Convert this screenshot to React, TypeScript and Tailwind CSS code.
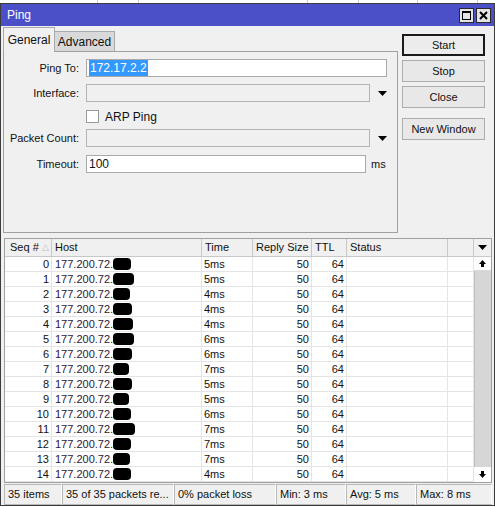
const rows = [
  { seq: 0, time: "5ms", blob: 18 },
  { seq: 1, time: "5ms", blob: 21 },
  { seq: 2, time: "4ms", blob: 17 },
  { seq: 3, time: "4ms", blob: 19 },
  { seq: 4, time: "4ms", blob: 20 },
  { seq: 5, time: "6ms", blob: 21 },
  { seq: 6, time: "6ms", blob: 19 },
  { seq: 7, time: "7ms", blob: 16 },
  { seq: 8, time: "5ms", blob: 19 },
  { seq: 9, time: "5ms", blob: 16 },
  { seq: 10, time: "6ms", blob: 18 },
  { seq: 11, time: "7ms", blob: 22 },
  { seq: 12, time: "7ms", blob: 18 },
  { seq: 13, time: "7ms", blob: 17 },
  { seq: 14, time: "4ms", blob: 18 },
];

const DownTri = () => (
  <svg width="9" height="5" viewBox="0 0 9 5">
    <path d="M0 0h9L4.5 5z" fill="#000" />
  </svg>
);

const ArrowUp = () => (
  <svg width="7" height="7" viewBox="0 0 7 7">
    <path d="M3.5 0L7 4H0z M2 4h3v3H2z" fill="#000" />
  </svg>
);

const ArrowDown = () => (
  <svg width="7" height="7" viewBox="0 0 7 7">
    <path d="M2 0h3v3H2z M0 3h7L3.5 7z" fill="#000" />
  </svg>
);

const Label = ({ text }: { text: string }) => (
  <div className="w-[76px] shrink-0 text-right pr-px">{text}</div>
);

const App = () => {
  return (
    <div className="w-[495px] h-[507px] bg-white font-['Liberation_Sans',Arial,sans-serif] text-[11px] text-[#111] leading-none overflow-hidden">
      {/* window behind */}
      <div className="flex h-[3px] bg-white">
        <div className="w-[98px] border-r border-[#cfcfcf]" />
        <div className="w-[41px] border-r border-[#cfcfcf]" />
        <div className="w-[169px] border-r border-[#cfcfcf]" />
        <div className="w-[51px] border-r border-[#cfcfcf]" />
        <div className="w-[59px] border-r border-[#cfcfcf]" />
        <div className="w-[60px] border-r border-[#cfcfcf]" />
      </div>

      <div className="w-[495px] h-[503px] border border-[#3c3c3c] bg-[#f0f0f0] flex flex-col">
        {/* title bar */}
        <div className="h-[22px] bg-[#4b50c8] flex items-center justify-between pl-[6px] pr-[3px]">
          <span className="text-white text-[12px]">Ping</span>
          <div className="flex gap-[2px]">
            <div className="w-[15px] h-[15px] bg-[#e4e4e4] border border-[#2a2a2a] flex items-center justify-center">
              <div className="w-[9px] h-[9px] border border-black border-t-2" />
            </div>
            <div className="w-[15px] h-[15px] bg-[#e4e4e4] border border-[#2a2a2a] flex items-center justify-center">
              <svg width="9" height="9" viewBox="0 0 9 9">
                <path d="M1 1L8 8M8 1L1 8" stroke="#000" strokeWidth="2" />
              </svg>
            </div>
          </div>
        </div>

        {/* top section */}
        <div className="flex pt-px pl-[2px] h-[207px]">
          <div className="w-[395px] flex flex-col">
            <div className="flex items-end h-[24px]">
              <div className="relative z-10 -mb-px h-[25px] w-[52px] bg-[#f0f0f0] border border-b-0 border-[#a9a9a9] flex items-center justify-center text-[12px]">
                General
              </div>
              <div className="h-[20px] w-[60px] bg-[#d9d9d9] border border-b-0 border-l-0 border-[#a9a9a9] flex items-center justify-center text-[12px]">
                Advanced
              </div>
            </div>
            <div className="h-[182px] border border-[#a0a0a0] pt-[7px] flex flex-col">
              <div className="flex items-center gap-[6px] h-[18px]">
                <Label text="Ping To:" />
                <div className="w-[301px] h-[18px] bg-white border border-[#a9a9a9] flex items-center pl-[2px]">
                  <span className="bg-[#3399ff] text-white text-[12px] px-px py-[2px]">172.17.2.2</span>
                </div>
              </div>
              <div className="flex items-center gap-[6px] h-[18px] mt-[7px]">
                <Label text="Interface:" />
                <div className="w-[284px] h-[18px] border border-[#b4b4b4]" />
                <div className="ml-[2px]"><DownTri /></div>
              </div>
              <div className="flex items-center h-[13px] mt-[8px] pl-[82px]">
                <div className="w-[13px] h-[13px] bg-white border border-[#9a9a9a]" />
                <span className="ml-[6px] text-[12px]">ARP Ping</span>
              </div>
              <div className="flex items-center gap-[6px] h-[18px] mt-[6px]">
                <Label text="Packet Count:" />
                <div className="w-[284px] h-[18px] border border-[#b4b4b4]" />
                <div className="ml-[2px]"><DownTri /></div>
              </div>
              <div className="flex items-center gap-[6px] h-[18px] mt-[8px]">
                <Label text="Timeout:" />
                <div className="w-[280px] h-[18px] bg-white border border-[#a9a9a9] flex items-center pl-[2px] text-[12px]">
                  100
                </div>
                <span className="-ml-[1px]">ms</span>
              </div>
            </div>
          </div>

          {/* buttons */}
          <div className="flex flex-col pt-[7px] pl-[4px]">
            <div className="w-[83px] h-[22px] border-2 border-[#1a1a1a] bg-[#ececec] flex items-center justify-center">Start</div>
            <div className="w-[83px] h-[22px] mt-[4px] border border-[#adadad] bg-[#e8e8e8] flex items-center justify-center">Stop</div>
            <div className="w-[83px] h-[22px] mt-[4px] border border-[#adadad] bg-[#e8e8e8] flex items-center justify-center">Close</div>
            <div className="w-[83px] h-[22px] mt-[10px] border border-[#adadad] bg-[#e8e8e8] flex items-center justify-center">New Window</div>
          </div>
        </div>

        {/* table */}
        <div className="ml-[3px] mt-[5px] w-[488px] border border-[#a0a0a0] flex bg-white">
          <div className="w-[469px]">
            <div className="grid grid-cols-[47px_150px_51px_59px_35px_101px_26px] h-[18px] bg-[#f0f0f0] border-b border-[#c8c8c8]">
              <div className="border-r border-[#c8c8c8] flex items-center pl-[5px] gap-[3px]">
                Seq #<span className="text-[#c0c0c0] text-[9px]">△</span>
              </div>
              <div className="border-r border-[#c8c8c8] flex items-center pl-[3px]">Host</div>
              <div className="border-r border-[#c8c8c8] flex items-center pl-[3px]">Time</div>
              <div className="border-r border-[#c8c8c8] flex items-center pl-[3px]">Reply Size</div>
              <div className="border-r border-[#c8c8c8] flex items-center pl-[3px]">TTL</div>
              <div className="border-r border-[#c8c8c8] flex items-center pl-[3px]">Status</div>
              <div className="border-r border-[#c8c8c8]" />
            </div>
            {rows.map((r) => (
              <div
                key={r.seq}
                className="grid grid-cols-[47px_150px_51px_59px_35px_101px_26px] h-[15px] border-b border-[#e4e4e4]"
              >
                <div className="border-r border-[#e4e4e4] flex items-center justify-end pr-[2px]">{r.seq}</div>
                <div className="border-r border-[#e4e4e4] flex items-center pl-[3px] text-[#2d1836]">
                  177.200.72.
                  <span
                    className="inline-block h-[12px] bg-black rounded-[4px]"
                    style={{ width: r.blob }}
                  />
                </div>
                <div className="border-r border-[#e4e4e4] flex items-center pl-[2px]">{r.time}</div>
                <div className="border-r border-[#e4e4e4] flex items-center justify-end pr-[2px]">50</div>
                <div className="border-r border-[#e4e4e4] flex items-center justify-end pr-[2px]">64</div>
                <div className="border-r border-[#e4e4e4]" />
                <div className="border-r border-[#e4e4e4]" />
              </div>
            ))}
          </div>
          <div className="w-[17px] flex flex-col">
            <div className="h-[18px] bg-[#f0f0f0] border-b border-[#c8c8c8] flex items-center justify-center">
              <DownTri />
            </div>
            <div className="h-[14px] flex items-center justify-center border-b border-[#d8d8d8]">
              <ArrowUp />
            </div>
            <div className="flex-1 bg-[#d6d6d6] border-l border-[#c0c0c0]" />
            <div className="h-[15px] flex items-center justify-center">
              <ArrowDown />
            </div>
          </div>
        </div>

        {/* status bar */}
        <div className="ml-[3px] mt-px w-[488px] h-[21px] flex">
          {[
            ["35 items", "w-[58px]"],
            ["35 of 35 packets re...", "w-[112px]"],
            ["0% packet loss", "w-[102px]"],
            ["Min: 3 ms", "w-[70px]"],
            ["Avg: 5 ms", "w-[70px]"],
            ["Max: 8 ms", "w-[76px]"],
          ].map(([t, w]) => (
            <div key={t} className={`${w} border border-[#b8b8b8] border-r-[#ffffff] flex items-center pl-[3px] whitespace-nowrap overflow-hidden`}>
              {t}
            </div>
          ))}
        </div>
      </div>
    </div>
  );
};

export default App;
